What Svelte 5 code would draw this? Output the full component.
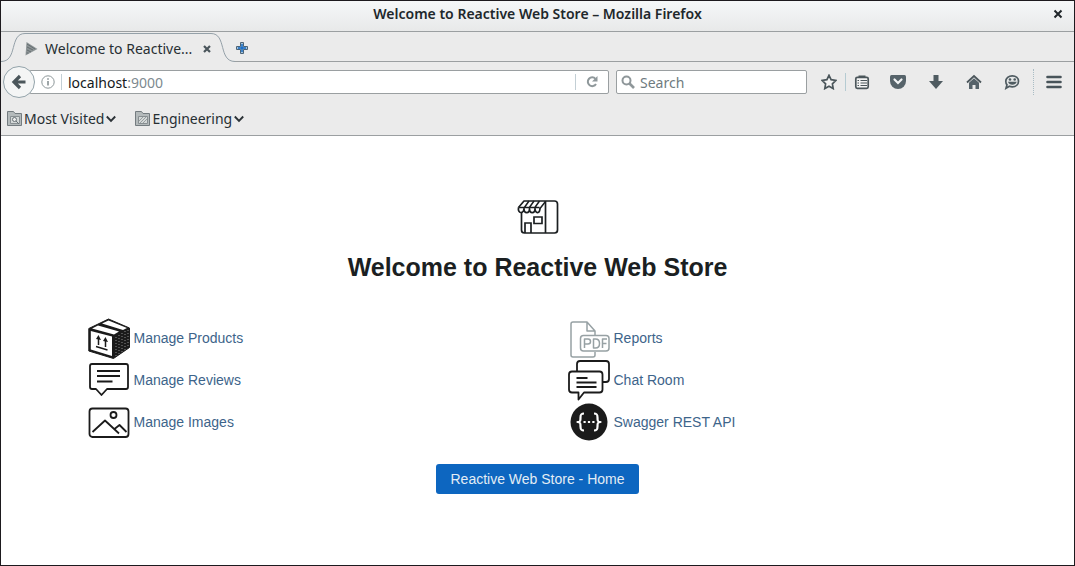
<script>
  const title = 'Welcome to Reactive Web Store';
  const bookmarks = [
    { label: 'Most Visited', kind: 'search' },
    { label: 'Engineering', kind: 'plain' },
  ];
  const columns = [
    [
      { label: 'Manage Products', icon: 'box' },
      { label: 'Manage Reviews', icon: 'review' },
      { label: 'Manage Images', icon: 'image' },
    ],
    [
      { label: 'Reports', icon: 'pdf' },
      { label: 'Chat Room', icon: 'chat' },
      { label: 'Swagger REST API', icon: 'swagger' },
    ],
  ];
</script>

<div class="window">
  <header class="titlebar">
    <span class="caption">{title} – Mozilla Firefox</span>
    <button class="close" aria-label="Close window">
      <svg width="10" height="10" viewBox="0 0 10 10"><path d="M1.500 1.500l7 7M8.500 1.500l-7 7" stroke="#20262a" stroke-width="2" fill="none" /></svg>
    </button>
  </header>

  <div class="tabstrip">
    <div class="tab">
      <svg class="edge" width="24" height="30" viewBox="0 0 24 30">
        <path d="M0 29.500C15 29 9 1.500 24 1.500V30H0z" fill="#ebebeb" />
        <path d="M0 29.500C17 29.500 8 1.500 24 1.500" fill="none" stroke="#94a0a8" />
      </svg>
      <div class="tabbody">
        <svg width="13" height="16" viewBox="0 0 13 16"><path d="M1.500 1L12.500 8 .5 14.500z" fill="#8d9496" /><path d="M2 3l8 5M2 6l6 3M2 9l4 2M1.500 12l2 0" stroke="#646d70" /></svg>
        <span class="tabtitle">Welcome to Reactive...</span>
        <button aria-label="Close tab">
          <svg width="8" height="8" viewBox="0 0 8 8"><path d="M1 1l6 6M7 1L1 7" stroke="#4a555b" stroke-width="2.200" /></svg>
        </button>
      </div>
      <svg class="edge" width="24" height="30" viewBox="0 0 24 30">
        <path d="M24 29.500C9 29 15 1.500 0 1.500V30H24z" fill="#ebebeb" />
        <path d="M24 29.500C7 29.500 16 1.500 0 1.500" fill="none" stroke="#94a0a8" />
      </svg>
    </div>
    <button class="newtab" aria-label="New tab">
      <svg width="12" height="12" viewBox="0 0 12 12"><path d="M4.500.5h3v4h4v3h-4v4h-3v-4h-4v-3h4z" fill="#a9c4da" stroke="#4c6478" /><path d="M6 2v8M2 6h8" stroke="#1268c4" stroke-width="1.400" /></svg>
    </button>
  </div>

  <nav class="navbar">
    <button class="back" aria-label="Back">
      <svg width="16" height="16" viewBox="0 0 16 16"><path d="M9 2L3 8l6 6M3 8h11.500" fill="none" stroke="#4b565b" stroke-width="3.200" /></svg>
    </button>
    <div class="urlbar">
      <svg width="14" height="14" viewBox="0 0 14 14"><circle cx="7" cy="7" r="6.200" fill="none" stroke="#8d9799" /><path d="M7 6v4.500M7 3.200v1.500" stroke="#7f898c" stroke-width="1.500" /></svg>
      <span class="rule"></span>
      <span class="address">localhost<span class="port">:9000</span></span>
      <span class="rule"></span>
      <button class="reload" aria-label="Reload">
        <svg width="12" height="12" viewBox="0 0 12 12"><path d="M9.500 2.800A4.400 4.400 0 1 0 10 8" fill="none" stroke="#8f989b" stroke-width="2" /><path d="M11.500 0v5.500H6z" fill="#8f989b" /></svg>
      </button>
    </div>
    <label class="search">
      <svg width="14" height="14" viewBox="0 0 14 14"><circle cx="5.500" cy="5.500" r="4" fill="none" stroke="#8f979a" stroke-width="2" /><path d="M8.500 8.500l4.500 4.500" stroke="#8f979a" stroke-width="2.600" /></svg>
      <input type="text" placeholder="Search" aria-label="Search" />
    </label>
    <div class="tools">
      <button class="narrow" aria-label="Bookmark this page">
        <svg width="16" height="16" viewBox="0 0 16 16"><path d="M8 1.300l2.100 4.400 4.800.7-3.500 3.400.8 4.800L8 12.300l-4.200 2.300.8-4.800L1.100 6.400l4.800-.7z" fill="#f3f3f3" stroke="#4b565b" stroke-width="1.700" /></svg>
      </button>
      <button class="narrow lined" aria-label="Show bookmarks">
        <svg width="16" height="16" viewBox="0 0 16 16"><rect x="1.800" y="3.300" width="12.400" height="11" rx="1.500" fill="#f4f4f4" stroke="#4b565b" stroke-width="1.700" /><path d="M4.500 4V1.500h7V4z" fill="#4b565b" /><path d="M3.500 6.500h1.500M6.500 6.500h6.500M3.500 9h1.500M6.500 9h6.500M3.500 11.500h1.500M6.500 11.500h6.500" stroke="#4b565b" stroke-width="1" /></svg>
      </button>
      <button aria-label="Pocket">
        <svg width="16" height="16" viewBox="0 0 16 16"><path d="M1.500 1h13q1.500 0 1.500 1.500V7a8 8 0 0 1-16 0V2.500Q0 1 1.500 1z" fill="#56636a" /><path d="M4.500 5.500L8 9l3.500-3.500" fill="none" stroke="#f2f4f5" stroke-width="2.200" stroke-linecap="round" /></svg>
      </button>
      <button aria-label="Downloads">
        <svg width="16" height="16" viewBox="0 0 16 16"><path d="M5.500 1h5v6H15l-7 8-7-8h4.500z" fill="#4f5b61" /></svg>
      </button>
      <button aria-label="Home">
        <svg width="16" height="16" viewBox="0 0 16 16"><path d="M1 8.500L8 2l7 6.500" fill="none" stroke="#4b565b" stroke-width="1.800" /><path d="M3 8.700l5-4.500 5 4.500V15H9.500v-4h-3v4H3z" fill="#56636a" /></svg>
      </button>
      <button aria-label="Start a conversation">
        <svg width="16" height="16" viewBox="0 0 16 16"><path d="M8.300 1.800c3.700 0 6.200 2.300 6.200 5.400s-2.500 5.600-6.200 5.600c-1 0-2-.2-2.800-.5L2 14.200l1-3.400C2 9.800 1.800 8.500 1.800 7.200c0-3.100 2.800-5.400 6.500-5.400z" fill="#e6e8e8" stroke="#4f5b61" stroke-width="1.700" /><circle cx="6" cy="5.500" r="1.300" fill="#4f5b61" /><circle cx="10.700" cy="5.500" r="1.300" fill="#4f5b61" /><path d="M4 7.800h8.700c-.8 4-7.900 4-8.700 0z" fill="#4f5b61" /></svg>
      </button>
      <button class="menu" aria-label="Open menu">
        <svg width="16" height="14" viewBox="0 0 16 14"><path d="M1.500 2h13M1.500 7h13M1.500 12h13" stroke="#48545a" stroke-width="2.600" stroke-linecap="round" /></svg>
      </button>
    </div>
  </nav>

  <div class="bookmarks">
    {#each bookmarks as mark}
      <button>
        <svg width="15" height="15" viewBox="0 0 15 15"><path d="M.5 14.500V.5h6l1.500 2h6.500v12z" fill="#b4babb" stroke="#747c80" /><path d="M3.500 5.500h9v7h-9z" fill="#d4d8d8" stroke="#888f92" />
          {#if mark.kind === 'search'}
            <circle cx="7.500" cy="8.500" r="2" fill="#eee" stroke="#697276" /><path d="M9 10l3 3" stroke="#697276" />
          {:else}
            <path d="M4 10l4-4M5 12l6-6M8 12l4-4" stroke="#979e9f" />
          {/if}
        </svg>
        <span>{mark.label}</span>
        <svg width="10" height="8" viewBox="0 0 10 8"><path d="M.8 1.500L5 5.800l4.200-4.300" fill="none" stroke="#2b3236" stroke-width="1.900" /></svg>
      </button>
    {/each}
  </div>

  <main>
    <svg width="42" height="42" viewBox="0 0 42 42" fill="none" stroke="#1b1f21" stroke-width="1.700" stroke-linejoin="round">
      <path d="M4.500 16v18q0 3 3 3h30q3 0 3-3V8q0-3-3-3H7L1.500 11.500M28.500 5v32" />
      <path d="M12 5l-5 7M17 5l-5 7M22.500 5l-5 7M28.500 5.500l-5.500 7M1.500 11.500h21" stroke-width="1.500" />
      <path d="M1.500 11.500c-1 6.500 5 6.500 5.500 1 0 5.500 5.500 5.500 5.500 0 0 5.500 5.500 5.500 5.500 0 0 5.500 5 5.500 5-.5" />
      <path d="M8 37V27h6v10M17 21h8v6.500h-8z" stroke-linejoin="miter" />
    </svg>
    <h1>{title}</h1>
    <div class="links">
      {#each columns as column}
        <ul>
          {#each column as item}
            <li>
              <a href="#{item.icon}">
                <svg width="42" height="42" viewBox="0 0 42 42" fill="none" stroke="#1b1b1b" stroke-width="1.800" stroke-linejoin="round">
                  {#if item.icon === 'box'}
                    <path d="M.8 11.500L20.500 2l21 9v19.500L25.500 41.500.8 34z" fill="#1b1b1b" stroke-width="1" />
                    <path d="M2.800 14l21.200 5.500v19.500L2.800 32.500z" fill="#fff" stroke="none" />
                    <path d="M4 11.500L10 8.500 31 14.500 26 17.500z M14 6.500L20.500 3.500 39 11 35 13z" fill="#fff" stroke="none" />
                    <path d="M28 20v19M31 18v19M34 16v19M37 14v19M40 13v17" stroke="#8a8a8a" stroke-width="1" stroke-dasharray="1 2" />
                    <path d="M10.500 28v-7M17.500 30v-7M8 29.500l11.500 3.500" stroke-width="1.500" />
                    <path d="M8 22l2.500-4 2.500 5zM15 24l2.500-4 2.500 5z" fill="#1b1b1b" stroke="none" />
                  {:else if item.icon === 'review'}
                    <path d="M4 5h34q2 0 2 2v21q0 2-2 2H19L13.500 36 8 30H4q-2 0-2-2V7q0-2 2-2z" />
                    <path d="M9 12h23M9 17h23M9 22.500h15.500" />
                  {:else if item.icon === 'image'}
                    <rect x="1.500" y="7.500" width="39" height="28.500" rx="3" />
                    <circle cx="25.500" cy="14" r="3" />
                    <path d="M4.500 31L17 19.500l14 13M26.500 28l5-4 7 7" />
                  {:else if item.icon === 'pdf'}
                    <g stroke="#97a1a4" stroke-width="1.500">
                      <path d="M13 40H5q-2 0-2-2V7q0-2 2-2h14l8 9v4.500M19 5v9h8M27 35v3q0 2-2 2H13" />
                      <rect x="12.500" y="18.500" width="28.500" height="15.500" rx="3" fill="#fff" />
                      <path d="M16.500 31v-9h3.500q2.500 0 2.500 2.500T20 27h-3.500M25.500 22h2q4 0 4 4.500t-4 4.500h-2zM34.500 31v-9H39M34.500 26.500h4" />
                    </g>
                  {:else if item.icon === 'chat'}
                    <path d="M9 12.500V5q0-3 3-3h26q3 0 3 3v15q0 3-3 3h-4" />
                    <path d="M4 12.500h27.500q3 0 3 3v15q0 3-3 3H16L10.500 40.500V33.500H4q-3 0-3-3v-15q0-3 3-3z" fill="#fff" />
                    <path d="M8.500 19h11M8.500 23.500h20M8.500 28h20" />
                  {:else}
                    <circle cx="21" cy="21" r="18.500" fill="#1b1b1b" stroke="none" />
                    <path d="M16 12.500c-3 0-3.500 1-3.500 4s0 4.500-3 4.500c3 0 3 1.500 3 4.500s.5 4 3.500 4M26 12.500c3 0 3.500 1 3.500 4s0 4.500 3 4.500c-3 0-3 1.500-3 4.500s-.5 4-3.500 4" stroke="#fff" stroke-width="2.200" />
                    <path d="M15.500 21h2.200M19.900 21h2.200M24.300 21h2.200" stroke="#fff" stroke-width="2.200" />
                  {/if}
                </svg>
                <span>{item.label}</span>
              </a>
            </li>
          {/each}
        </ul>
      {/each}
    </div>
    <a class="home" href="#home">Reactive Web Store - Home</a>
  </main>
</div>

<style>
  :global(body) {
    margin: 0;
  }
  * {
    box-sizing: border-box;
  }
  .window {
    min-height: 100vh;
    display: flex;
    flex-direction: column;
    border: 1px solid #1d1a1e;
    background: #fff;
    font: 14px/18px 'Noto Sans', sans-serif;
    color: #272f33;
  }
  svg {
    display: block;
    flex: none;
  }
  button {
    display: flex;
    align-items: center;
    justify-content: center;
    padding: 0;
    border: 0;
    background: none;
    font: inherit;
    color: inherit;
  }
  .titlebar {
    display: grid;
    grid-template-columns: 32px 1fr 32px;
    align-items: center;
    height: 31px;
    padding-bottom: 4px;
    border-bottom: 1px solid #9b9fa1;
    background: linear-gradient(#f5f7f8, #e8e9e9);
  }
  .caption {
    grid-column: 2;
    text-align: center;
    font-weight: 600;
    color: #20272b;
  }
  .close {
    height: 24px;
  }
  .tabstrip {
    display: flex;
    height: 30px;
    background: linear-gradient(#9b9fa1, #9b9fa1) bottom / 100% 1px no-repeat #ebebeb;
  }
  .tab {
    display: flex;
    width: 234px;
  }
  .tabbody {
    flex: 1;
    display: flex;
    align-items: center;
    gap: 7px;
    margin-top: 1px;
    padding-top: 2px;
    border-top: 1px solid #94a0a8;
    background: #ebebeb;
  }
  .tabtitle {
    flex: 1;
    white-space: nowrap;
  }
  .newtab {
    width: 14px;
    padding-top: 2px;
  }
  .navbar {
    display: flex;
    align-items: center;
    height: 40px;
    padding-left: 2px;
    background: #ebebeb;
  }
  .back {
    z-index: 1;
    width: 32px;
    height: 32px;
    border: 1px solid #93a3aa;
    border-radius: 50%;
    background: #f4f5f5;
  }
  .urlbar,
  .search {
    display: flex;
    align-items: center;
    min-width: 0;
    height: 24px;
    border: 1px solid #9a9fa1;
    border-radius: 2px;
    background: #fff;
  }
  .urlbar {
    flex: 1;
    gap: 6px;
    margin-left: -6px;
    padding-left: 11px;
  }
  .rule {
    width: 1px;
    height: 16px;
    background: #c3cfd5;
  }
  .address {
    flex: 1;
    padding-top: 2px;
    color: #14191c;
  }
  .port {
    color: #7d8a90;
  }
  .reload {
    width: 26px;
    height: 22px;
    padding-right: 6px;
  }
  .search {
    width: 191px;
    gap: 5px;
    margin-left: 7px;
    padding-left: 4px;
  }
  .search input {
    flex: 1;
    min-width: 0;
    padding: 2px 0 0;
    border: 0;
    outline: 0;
    background: none;
    font: inherit;
  }
  .search input::placeholder {
    color: #6f7b80;
    opacity: 1;
  }
  .tools {
    display: flex;
    align-items: center;
    margin-left: 6px;
  }
  .tools button {
    width: 38px;
    height: 26px;
  }
  .tools .narrow {
    width: 32px;
    height: 18px;
  }
  .tools .lined {
    margin-right: 2px;
    border-left: 1px solid #b5cbd2;
  }
  .tools .menu {
    width: 41px;
    margin-left: 2px;
    border-left: 1px dotted #a9bcc4;
  }
  .bookmarks {
    display: flex;
    align-items: center;
    gap: 19px;
    height: 34px;
    padding-left: 6px;
    border-bottom: 1px solid #9b9fa1;
    background: #ebebeb;
  }
  .bookmarks button {
    gap: 2px;
  }
  main {
    flex: 1;
    display: flex;
    flex-direction: column;
    align-items: center;
    padding: 60px 16px 70px;
    font: 14px/20px 'Liberation Sans', sans-serif;
  }
  h1 {
    margin: 13px 0 34px;
    font-size: 25px;
    line-height: 32px;
    color: #1b1f22;
  }
  .links {
    display: grid;
    grid-template-columns: 1fr 1fr;
    width: 100%;
    max-width: 960px;
  }
  ul {
    margin: 0;
    padding: 0 0 0 30px;
    list-style: none;
  }
  li a {
    display: inline-flex;
    align-items: center;
    gap: 4px;
    color: #3d648a;
    text-decoration: none;
  }
  li {
    height: 42px;
  }
  .home {
    margin-top: 21px;
    padding: 5px 14px;
    border-radius: 3px;
    background: #0d66c0;
    color: #e3edf5;
    text-decoration: none;
  }
</style>
